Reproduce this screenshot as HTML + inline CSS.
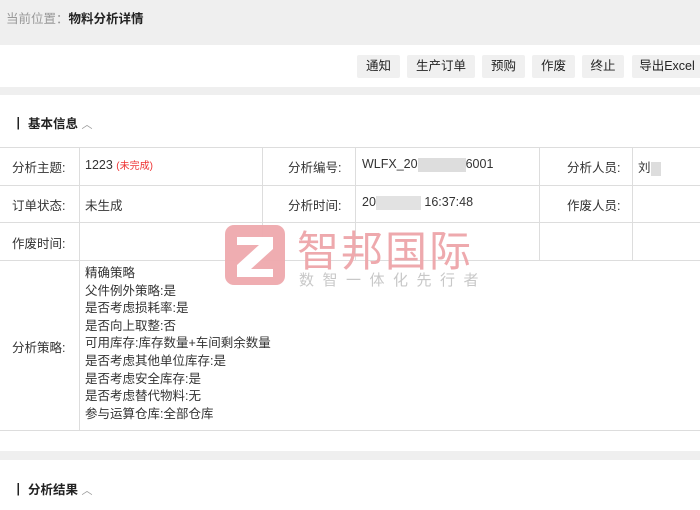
<!DOCTYPE html>
<html><head><meta charset="utf-8"><style>
*{margin:0;padding:0;box-sizing:border-box}
body{width:700px;height:510px;overflow:hidden;background:#fff;font-family:"Liberation Sans","Noto Sans CJK SC",sans-serif;font-size:13px;color:#333;position:relative}
.abs{position:absolute}
.top{left:0;top:0;width:700px;height:45px;background:#efefef}
.btn{position:absolute;top:55px;height:23px;background:#f0f0f0;border-radius:2px;font-size:12.5px;line-height:23px;text-align:center;color:#222}
.gray{left:0;width:700px;background:#efefef}
.title{font-size:12.5px;font-weight:bold;color:#222}
.hl{position:absolute;height:1px;background:#ddd;left:0;width:700px}
.vl{position:absolute;width:1px;background:#ddd}
.t{position:absolute;font-size:12.5px;color:#333;white-space:nowrap}
</style></head><body>
<div class="abs top"></div>
<div class="abs" style="left:6px;top:8px;font-size:12.5px;color:#999">当前位置：<b style="color:#222">物料分析详情</b></div>
<div class="btn" style="left:357px;width:43px">通知</div>
<div class="btn" style="left:407px;width:68px">生产订单</div>
<div class="btn" style="left:482px;width:43px">预购</div>
<div class="btn" style="left:532px;width:43px">作废</div>
<div class="btn" style="left:582px;width:42px">终止</div>
<div class="btn" style="left:632px;width:70px">导出Excel</div>
<div class="abs gray" style="top:87px;height:8px"></div>
<div class="abs title" style="left:12px;top:113px">┃ 基本信息 <span style="font-weight:normal;color:#999;font-size:11px">︿</span></div>

<div class="hl" style="top:147px"></div>
<div class="hl" style="top:185px"></div>
<div class="hl" style="top:222px"></div>
<div class="hl" style="top:260px"></div>
<div class="hl" style="top:430px"></div>
<div class="vl" style="left:79px;top:147px;height:283px"></div>
<div class="vl" style="left:262px;top:147px;height:113px"></div>
<div class="vl" style="left:355px;top:147px;height:113px"></div>
<div class="vl" style="left:539px;top:147px;height:113px"></div>
<div class="vl" style="left:632px;top:147px;height:113px"></div>

<div class="t" style="left:12px;top:157px">分析主题:</div>
<div class="t" style="left:85px;top:157px">1223 <span style="color:#e33;font-size:10px">(未完成)</span></div>
<div class="t" style="left:288px;top:157px">分析编号:</div>
<div class="t" style="left:362px;top:157px">WLFX_20<span style="display:inline-block;width:48px;height:14px;background:#ddd;vertical-align:middle"></span>6001</div>
<div class="t" style="left:567px;top:157px">分析人员:</div>
<div class="t" style="left:638px;top:157px">刘<span style="display:inline-block;width:10px;height:14px;background:#ddd;vertical-align:middle"></span></div>
<div class="t" style="left:12px;top:195px">订单状态:</div>
<div class="t" style="left:85px;top:195px">未生成</div>
<div class="t" style="left:288px;top:195px">分析时间:</div>
<div class="t" style="left:362px;top:195px">20<span style="display:inline-block;width:45px;height:14px;background:#e2e2e2;vertical-align:middle"></span> 16:37:48</div>
<div class="t" style="left:567px;top:195px">作废人员:</div>
<div class="t" style="left:12px;top:233px">作废时间:</div>

<div class="abs" style="left:225px;top:225px;width:60px;height:60px;background:#eea9ad;border-radius:9px;opacity:.95"></div>
<svg class="abs" style="left:225px;top:225px" width="60" height="60"><path d="M12 12H48V24L26 44H48V52H12V40L34 20H12Z" fill="#fff"/></svg>
<div class="abs" style="left:297px;top:218px;font-size:42px;color:#eea9ad;letter-spacing:2px;white-space:nowrap">智邦国际</div>
<div class="abs" style="left:299px;top:269px;font-size:15px;color:#c8c8c8;letter-spacing:8.5px;white-space:nowrap">数智一体化先行者</div>

<div class="t" style="left:12px;top:337px">分析策略:</div>
<div class="t" style="left:85px;top:265px;line-height:17.6px">精确策略<br>父件例外策略:是<br>是否考虑损耗率:是<br>是否向上取整:否<br>可用库存:库存数量+车间剩余数量<br>是否考虑其他单位库存:是<br>是否考虑安全库存:是<br>是否考虑替代物料:无<br>参与运算仓库:全部仓库</div>

<div class="abs gray" style="top:451px;height:9px"></div>
<div class="abs title" style="left:12px;top:479px">┃ 分析结果 <span style="font-weight:normal;color:#999;font-size:11px">︿</span></div>
</body></html>
